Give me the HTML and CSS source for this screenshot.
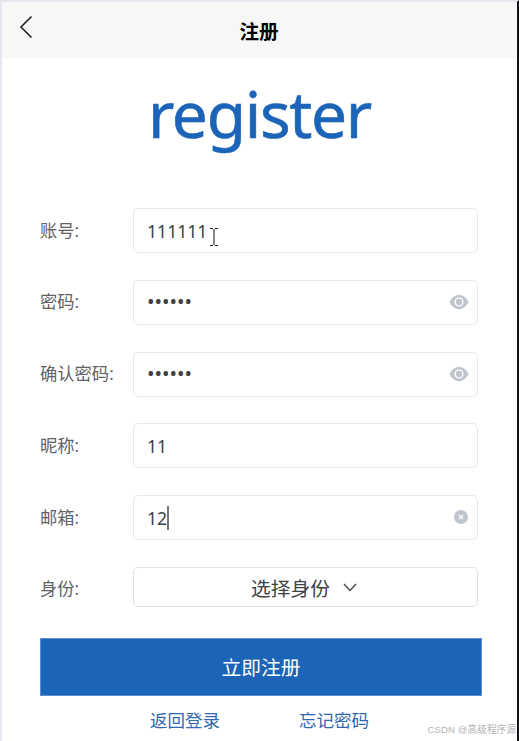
FILE: index.html
```html
<!DOCTYPE html>
<html lang="zh-CN">
<head>
    <meta charset="utf-8">
    <title>注册</title>
    <link rel="stylesheet" href="styles.css">
</head>
<body>
    <div class="page">
        <header class="navbar">
            <svg class="back" viewBox="0 0 14 24"><path d="M12.5 1.5 L2 12 L12.5 22.5"/></svg>
            <h1 class="title">注册</h1>
        </header>

        <div class="logo">register</div>

        <!-- 注册表单 -->
        <div class="form">
            <div class="row">
                <label class="label">账号:</label>
                <div class="field">
                    <span class="value">111111</span>
                    <svg class="cursor" viewBox="0 0 10 20"><path d="M1 1.5H4M6 1.5H9M5 2V18M1 18.5H4M6 18.5H9"/></svg>
                </div>
            </div>
            <div class="row">
                <label class="label">密码:</label>
                <div class="field">
                    <span class="value dots">••••••</span>
                    <svg class="eye" viewBox="0 0 20 16"><path d="M.5 8C4.500 -1.500 15.500 -1.500 19.500 8C15.500 17.500 4.500 17.500 .5 8Z"/><circle class="ring" cx="10" cy="8" r="3.900"/></svg>
                </div>
            </div>
            <div class="row">
                <label class="label">确认密码:</label>
                <div class="field">
                    <span class="value dots">••••••</span>
                    <svg class="eye" viewBox="0 0 20 16"><path d="M.5 8C4.500 -1.500 15.500 -1.500 19.500 8C15.500 17.500 4.500 17.500 .5 8Z"/><circle class="ring" cx="10" cy="8" r="3.900"/></svg>
                </div>
            </div>
            <div class="row">
                <label class="label">昵称:</label>
                <div class="field">
                    <span class="value">11</span>
                </div>
            </div>
            <div class="row">
                <label class="label">邮箱:</label>
                <div class="field">
                    <span class="value">12</span>
                    <span class="caret"></span>
                    <svg class="clear" viewBox="0 0 14 14"><circle cx="7" cy="7" r="7"/><path d="M4.800 4.800L9.200 9.200M9.200 4.800L4.800 9.200"/></svg>
                </div>
            </div>
            <div class="row">
                <label class="label label-select">身份:</label>
                <div class="field select">
                    <span>选择身份</span>
                    <svg class="arrow" viewBox="0 0 14 9"><path d="M1 1L7 7.500L13 1"/></svg>
                </div>
            </div>
        </div>

        <div class="submit">立即注册</div>

        <div class="links">
            <a class="link">返回登录</a>
            <a class="link">忘记密码</a>
        </div>

        <div class="watermark">CSDN @高级程序源</div>
    </div>
</body>
</html>
```
FILE: styles.css
```css
* {
    box-sizing: border-box;
}

body {
    margin: 0;
    font-family: "Open Sans", "Noto Sans CJK SC", sans-serif;
    background-color: #fff;
}

.page {
    position: relative;
    height: 741px;
    border-top: 2px solid #e6e6ef;
    border-left: 2px solid #e6e6ef;
    border-right: 2px solid #111216;
    overflow: hidden;
}

/* 顶部导航 */
.navbar {
    display: flex;
    align-items: center;
    height: 56px;
    padding: 0 17px;
    background-color: #f7f7f7;
}

.back {
    width: 14px;
    height: 24px;
    margin-bottom: 7px;
    fill: none;
    stroke: #222;
    stroke-width: 1.6;
}

.title {
    flex: 1;
    margin: 1px 15px 0 0;
    font-family: "Noto Sans CJK SC", sans-serif;
    font-size: 19.5px;
    line-height: 28px;
    font-weight: bold;
    text-align: center;
    color: #000;
}

.logo {
    height: 150px;
    padding-top: 11px;
    line-height: 90px;
    font-family: "Noto Sans", sans-serif;
    font-size: 64px;
    letter-spacing: -1.3px;
    text-align: center;
    color: #1b64b8;
    -webkit-text-stroke: 0.6px #1b64b8;
}

/* 表单 */
.form {
    display: grid;
    row-gap: 26.8px;
    padding: 0 39px 0 38px;
}

.row {
    display: flex;
    align-items: center;
}

.label {
    width: 93px;
    font-size: 17.3px;
    line-height: 24px;
    color: #606266;
}

.label-select {
    padding-top: 5px;
}

.field {
    position: relative;
    display: flex;
    align-items: center;
    width: 345px;
    height: 45px;
    padding: 0 8px 0 13px;
    border: 1.5px solid #e9e9eb;
    border-radius: 5px;
    color: #404145;
}

.value {
    font-family: "Noto Sans", sans-serif;
    font-size: 17.6px;
    line-height: 24px;
}

.dots {
    font-size: 20px;
}

.cursor {
    position: absolute;
    left: 75px;
    top: 18px;
    width: 10px;
    height: 20px;
    fill: none;
    stroke: #111;
    stroke-width: 1;
}

.eye {
    width: 20px;
    height: 16px;
    margin-left: auto;
    fill: #c0c4cc;
}

.ring {
    fill: #c0c4cc;
    stroke: #fff;
    stroke-width: 1.4;
}

.caret {
    width: 1.5px;
    height: 24px;
    background-color: #777;
}

.clear {
    width: 14px;
    height: 14px;
    margin: 0 1px 1px auto;
    fill: #c0c4cc;
}

.clear path {
    stroke: #fff;
    stroke-width: 1.2;
}

.select {
    justify-content: center;
    gap: 13px;
    height: 40px;
    padding: 2px 3px 0 0;
    border-color: #e2e2e5;
    font-size: 19.8px;
}

.arrow {
    width: 14px;
    height: 9px;
    fill: none;
    stroke: #444;
    stroke-width: 1.3;
}

.submit {
    width: 442px;
    height: 58px;
    margin: 31px 0 0 38px;
    border: 1px solid #5b8fce;
    font-size: 19.8px;
    line-height: 58px;
    text-align: center;
    color: #fff;
    background-color: #1b64b8;
}

/* 底部链接 */
.links {
    display: flex;
    gap: 79px;
    padding: 11px 0 0 148px;
}

.link {
    font-size: 17.5px;
    line-height: 26px;
    color: #3268b0;
}

.watermark {
    position: absolute;
    right: 1px;
    bottom: 3px;
    font-family: "Liberation Sans", "Noto Sans CJK SC", sans-serif;
    font-size: 9.7px;
    line-height: 16px;
    color: #b4b4b4;
}
```
